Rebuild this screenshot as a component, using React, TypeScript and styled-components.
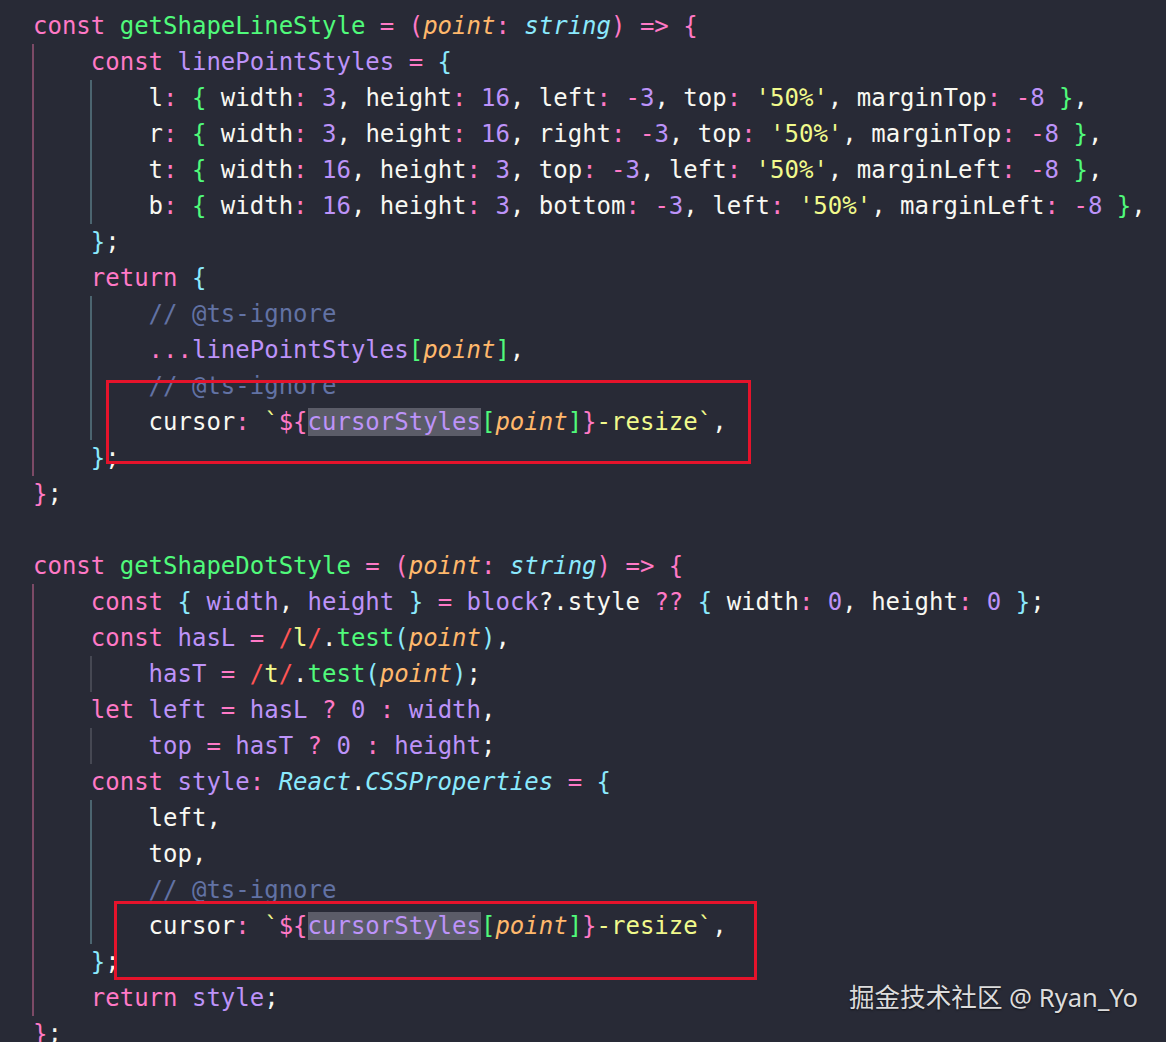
import React from "react";
import styled, { createGlobalStyle, css } from "styled-components";

type Kind =
  | "kw"
  | "fn"
  | "vr"
  | "pa"
  | "ty"
  | "st"
  | "nu"
  | "pl"
  | "cm"
  | "cy"
  | "gr"
  | "re"
  | "hl";

type Tok = [Kind, string];
type Guide = "pink" | "teal" | "gray";
type LineDef = { guides: Guide[]; toks: Tok[] };

const GlobalStyle = createGlobalStyle`
  html, body {
    margin: 0;
    padding: 0;
    background: #282a36;
  }
  #root {
    min-height: 1042px;
  }
`;

const colors: Record<Kind, string> = {
  kw: "#ff79c6",
  fn: "#50fa7b",
  vr: "#bd93f9",
  pa: "#ffb86c",
  ty: "#8be9fd",
  st: "#f1fa8c",
  nu: "#bd93f9",
  pl: "#f8f8f2",
  cm: "#6272a4",
  cy: "#8be9fd",
  gr: "#50fa7b",
  re: "#ff5555",
  hl: "#bd93f9",
};

const guideColors: Record<Guide, string> = {
  pink: "#7c4a66",
  teal: "#4c6570",
  gray: "#464853",
};

const Page = styled.div`
  position: relative;
  width: 1166px;
  height: 1042px;
  overflow: hidden;
  background: #282a36;
`;

const Editor = styled.div`
  display: flex;
  flex-direction: column;
  padding: 8px 0 0 33px;
  font-family: "DejaVu Sans Mono", "Liberation Mono", monospace;
  font-size: 24px;
  color: #f8f8f2;
`;

const Line = styled.div`
  display: flex;
  align-items: stretch;
  height: 36px;
  line-height: 36px;
  white-space: pre;
`;

const Indent = styled.span<{ $guide: Guide }>`
  display: inline-block;
  box-sizing: border-box;
  width: 4ch;
  height: 36px;
  border-left: 2px solid ${(p) => guideColors[p.$guide]};
  margin-left: -1px;
  margin-right: 1px;
`;

const Token = styled.span<{ $kind: Kind }>`
  color: ${(p) => colors[p.$kind]};
  ${(p) =>
    (p.$kind === "pa" || p.$kind === "ty") &&
    css`
      font-style: italic;
    `}
  ${(p) =>
    p.$kind === "hl" &&
    css`
      background: #5b5c68;
    `}
`;

const Mark = styled.div<{ $left: number; $top: number; $w: number; $h: number }>`
  position: absolute;
  left: ${(p) => p.$left}px;
  top: ${(p) => p.$top}px;
  width: ${(p) => p.$w}px;
  height: ${(p) => p.$h}px;
  box-sizing: border-box;
  border: 3.5px solid #e5132b;
  pointer-events: none;
`;

const Watermark = styled.div`
  position: absolute;
  right: 28px;
  top: 979px;
  font-family: "Noto Sans", "Noto Sans CJK SC", sans-serif;
  font-size: 25.6px;
  line-height: 38px;
  color: #dcdcdc;
  text-shadow: 0 1px 2px rgba(0, 0, 0, 0.6);
  white-space: pre;
`;

const P = (s: string): Tok => ["pl", s];
const K = (s: string): Tok => ["kw", s];
const N = (s: string): Tok => ["nu", s];
const S = (s: string): Tok => ["st", s];
const V = (s: string): Tok => ["vr", s];
const A = (s: string): Tok => ["pa", s];
const G = (s: string): Tok => ["gr", s];
const C = (s: string): Tok => ["cy", s];

const prop = (name: string, val: Tok[]): Tok[] => [P(name), K(":"), P(" "), ...val];

const lineObj = (key: string, parts: Tok[][]): Tok[] => {
  const out: Tok[] = [P(key), K(":"), P(" "), G("{"), P(" ")];
  parts.forEach((pt, i) => {
    out.push(...pt);
    if (i < parts.length - 1) out.push(P(", "));
  });
  out.push(P(" "), G("}"), P(","));
  return out;
};

const cursorLine: Tok[] = [
  P("cursor"),
  K(":"),
  P(" "),
  S("`"),
  K("${"),
  ["hl", "cursorStyles"],
  G("["),
  A("point"),
  G("]"),
  K("}"),
  S("-resize`"),
  P(","),
];

const lines: LineDef[] = [
  {
    guides: [],
    toks: [
      K("const"), P(" "), ["fn", "getShapeLineStyle"], P(" "), K("="), P(" "),
      K("("), A("point"), K(":"), P(" "), ["ty", "string"], K(")"), P(" "), K("=>"), P(" "), K("{"),
    ],
  },
  {
    guides: ["pink"],
    toks: [K("const"), P(" "), V("linePointStyles"), P(" "), K("="), P(" "), C("{")],
  },
  {
    guides: ["pink", "teal"],
    toks: lineObj("l", [
      prop("width", [N("3")]),
      prop("height", [N("16")]),
      prop("left", [K("-"), N("3")]),
      prop("top", [S("'50%'")]),
      prop("marginTop", [K("-"), N("8")]),
    ]),
  },
  {
    guides: ["pink", "teal"],
    toks: lineObj("r", [
      prop("width", [N("3")]),
      prop("height", [N("16")]),
      prop("right", [K("-"), N("3")]),
      prop("top", [S("'50%'")]),
      prop("marginTop", [K("-"), N("8")]),
    ]),
  },
  {
    guides: ["pink", "teal"],
    toks: lineObj("t", [
      prop("width", [N("16")]),
      prop("height", [N("3")]),
      prop("top", [K("-"), N("3")]),
      prop("left", [S("'50%'")]),
      prop("marginLeft", [K("-"), N("8")]),
    ]),
  },
  {
    guides: ["pink", "teal"],
    toks: lineObj("b", [
      prop("width", [N("16")]),
      prop("height", [N("3")]),
      prop("bottom", [K("-"), N("3")]),
      prop("left", [S("'50%'")]),
      prop("marginLeft", [K("-"), N("8")]),
    ]),
  },
  { guides: ["pink"], toks: [C("}"), P(";")] },
  { guides: ["pink"], toks: [K("return"), P(" "), C("{")] },
  { guides: ["pink", "teal"], toks: [["cm", "// @ts-ignore"]] },
  {
    guides: ["pink", "teal"],
    toks: [K("..."), V("linePointStyles"), G("["), A("point"), G("]"), P(",")],
  },
  { guides: ["pink", "teal"], toks: [["cm", "// @ts-ignore"]] },
  { guides: ["pink", "teal"], toks: cursorLine },
  { guides: ["pink"], toks: [C("}"), P(";")] },
  { guides: [], toks: [K("}"), P(";")] },
  { guides: [], toks: [] },
  {
    guides: [],
    toks: [
      K("const"), P(" "), ["fn", "getShapeDotStyle"], P(" "), K("="), P(" "),
      K("("), A("point"), K(":"), P(" "), ["ty", "string"], K(")"), P(" "), K("=>"), P(" "), K("{"),
    ],
  },
  {
    guides: ["pink"],
    toks: [
      K("const"), P(" "), C("{"), P(" "), V("width"), P(", "), V("height"), P(" "), C("}"), P(" "),
      K("="), P(" "), V("block"), P("?.style"), P(" "), K("??"), P(" "), C("{"), P(" "),
      P("width"), K(":"), P(" "), N("0"), P(", "), P("height"), K(":"), P(" "), N("0"), P(" "), C("}"), P(";"),
    ],
  },
  {
    guides: ["pink"],
    toks: [
      K("const"), P(" "), V("hasL"), P(" "), K("="), P(" "), ["re", "/"], S("l"), ["re", "/"],
      P("."), G("test"), C("("), A("point"), C(")"), P(","),
    ],
  },
  {
    guides: ["pink", "gray"],
    toks: [
      V("hasT"), P(" "), K("="), P(" "), ["re", "/"], S("t"), ["re", "/"],
      P("."), G("test"), C("("), A("point"), C(")"), P(";"),
    ],
  },
  {
    guides: ["pink"],
    toks: [
      K("let"), P(" "), V("left"), P(" "), K("="), P(" "), V("hasL"), P(" "), K("?"), P(" "),
      N("0"), P(" "), K(":"), P(" "), V("width"), P(","),
    ],
  },
  {
    guides: ["pink", "gray"],
    toks: [
      V("top"), P(" "), K("="), P(" "), V("hasT"), P(" "), K("?"), P(" "),
      N("0"), P(" "), K(":"), P(" "), V("height"), P(";"),
    ],
  },
  {
    guides: ["pink"],
    toks: [
      K("const"), P(" "), V("style"), K(":"), P(" "), ["ty", "React"], P("."), ["ty", "CSSProperties"],
      P(" "), K("="), P(" "), C("{"),
    ],
  },
  { guides: ["pink", "teal"], toks: [P("left,")] },
  { guides: ["pink", "teal"], toks: [P("top,")] },
  { guides: ["pink", "teal"], toks: [["cm", "// @ts-ignore"]] },
  { guides: ["pink", "teal"], toks: cursorLine },
  { guides: ["pink"], toks: [C("}"), P(";")] },
  { guides: ["pink"], toks: [K("return"), P(" "), V("style"), P(";")] },
  { guides: [], toks: [K("}"), P(";")] },
];

export default function App() {
  return (
    <Page>
      <GlobalStyle />
      <Editor>
        {lines.map((ln, i) => (
          <Line key={i}>
            {ln.guides.map((g, j) => (
              <Indent key={j} $guide={g} />
            ))}
            <span>
              {ln.toks.map(([k, s], j) => (
                <Token key={j} $kind={k}>
                  {s}
                </Token>
              ))}
            </span>
          </Line>
        ))}
      </Editor>
      <Mark $left={106} $top={380} $w={645} $h={84} />
      <Mark $left={114} $top={901} $w={643} $h={79} />
      <Watermark>掘金技术社区 @ Ryan_Yo</Watermark>
    </Page>
  );
}
